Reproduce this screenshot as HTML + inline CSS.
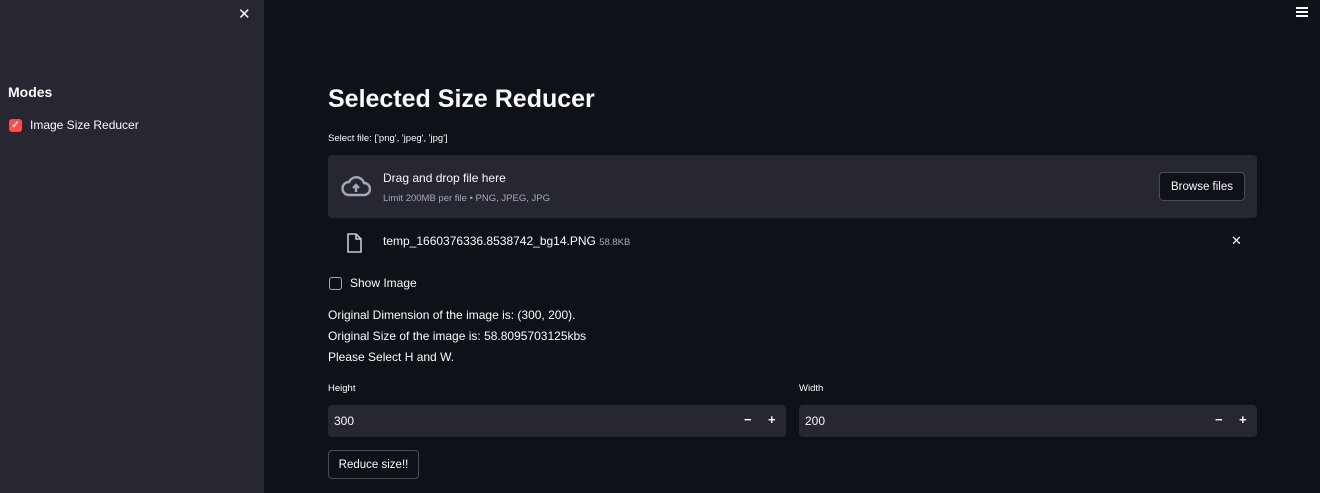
<!DOCTYPE html>
<html><head><style>
*{box-sizing:border-box;margin:0;padding:0}
body{width:1320px;height:493px;background:#0e1117;font-family:"Liberation Sans",sans-serif;color:#fafafa;position:relative;overflow:hidden}
.sb{position:absolute;left:0;top:0;width:264px;height:493px;background:#262730}
.abs{position:absolute}
.t{font-size:12px}
.box{background:#262730;border-radius:4px}
.btn{border:1px solid #4a4b55;border-radius:4px;background:#0e1117;font-size:11.5px;display:flex;align-items:center;justify-content:center}
</style></head><body>
<div class="sb">
 <div class="abs" style="left:238px;top:5px;font-size:15px;color:#fafafa;font-weight:300">✕</div>
 <div class="abs" style="left:8px;top:84px;font-size:14px;font-weight:bold">Modes</div>
 <div class="abs" style="left:9px;top:119px;width:13px;height:13px;background:#ff4b4b;border-radius:3px;color:#fff;font-size:10px;line-height:13px;text-align:center;font-weight:bold">✓</div>
 <div class="abs t" style="left:30px;top:118px">Image Size Reducer</div>
</div>
<div class="abs" style="right:12px;top:7px;width:12px">
 <div style="height:1.5px;background:#fafafa;margin-bottom:2.5px"></div><div style="height:1.5px;background:#fafafa;margin-bottom:2.5px"></div><div style="height:1.5px;background:#fafafa"></div>
</div>
<div class="abs" style="left:328px;top:85px;font-size:25px;font-weight:bold">Selected Size Reducer</div>
<div class="abs" style="left:328px;top:133px;font-size:9.5px">Select file: ['png', 'jpeg', 'jpg']</div>
<div class="abs box" style="left:328px;top:155px;width:929px;height:63px">
 <svg class="abs" style="left:13px;top:20px" width="30" height="22" viewBox="0 0 30 22"><path d="M8 20 H23 A6 6 0 0 0 23 8 A8 8 0 0 0 8 7 A6.5 6.5 0 0 0 8 20 Z" fill="none" stroke="#a3a8b8" stroke-width="2.4"/><path d="M15 17 V11 M12 13 L15 10 L18 13" stroke="#a3a8b8" stroke-width="2.4" fill="none"/></svg>
 <div class="abs" style="left:55px;top:16px;font-size:12px">Drag and drop file here</div>
 <div class="abs" style="left:55px;top:38px;font-size:9.5px;color:#a3a8b8">Limit 200MB per file • PNG, JPEG, JPG</div>
 <div class="abs btn" style="left:831px;top:17px;width:86px;height:29px">Browse files</div>
</div>
<svg class="abs" style="left:346px;top:233px" width="16" height="20" viewBox="0 0 16 20"><path d="M2 1 H10 L15 6 V19 H2 Z M10 1 V6 H15" fill="none" stroke="#c6c8d0" stroke-width="1.6"/></svg>
<div class="abs" style="left:383px;top:234px;font-size:12px">temp_1660376336.8538742_bg14.PNG <span style="font-size:9.5px;color:#a3a8b8">58.8KB</span></div>
<div class="abs" style="left:1231px;top:233px;font-size:13px;font-weight:300">✕</div>
<div class="abs" style="left:329px;top:277px;width:13px;height:13px;border:1px solid #a3a8b8;border-radius:3px"></div>
<div class="abs t" style="left:350px;top:276px">Show Image</div>
<div class="abs t" style="left:328px;top:308px">Original Dimension of the image is: (300, 200).</div>
<div class="abs t" style="left:328px;top:329px">Original Size of the image is: 58.8095703125kbs</div>
<div class="abs t" style="left:328px;top:350px">Please Select H and W.</div>
<div class="abs" style="left:328px;top:383px;font-size:9.5px">Height</div>
<div class="abs" style="left:799px;top:383px;font-size:9.5px">Width</div>
<div class="abs box" style="left:328px;top:405px;width:458px;height:32px"><div class="abs t" style="left:6px;top:9px">300</div><div class="abs" style="left:416px;top:7px;font-size:13px;font-weight:bold">−</div><div class="abs" style="left:440px;top:7px;font-size:13px;font-weight:bold">+</div></div>
<div class="abs box" style="left:799px;top:405px;width:458px;height:32px"><div class="abs t" style="left:6px;top:9px">200</div><div class="abs" style="left:416px;top:7px;font-size:13px;font-weight:bold">−</div><div class="abs" style="left:440px;top:7px;font-size:13px;font-weight:bold">+</div></div>
<div class="abs btn" style="left:328px;top:450px;width:91px;height:29px">Reduce size!!</div>
</body></html>
